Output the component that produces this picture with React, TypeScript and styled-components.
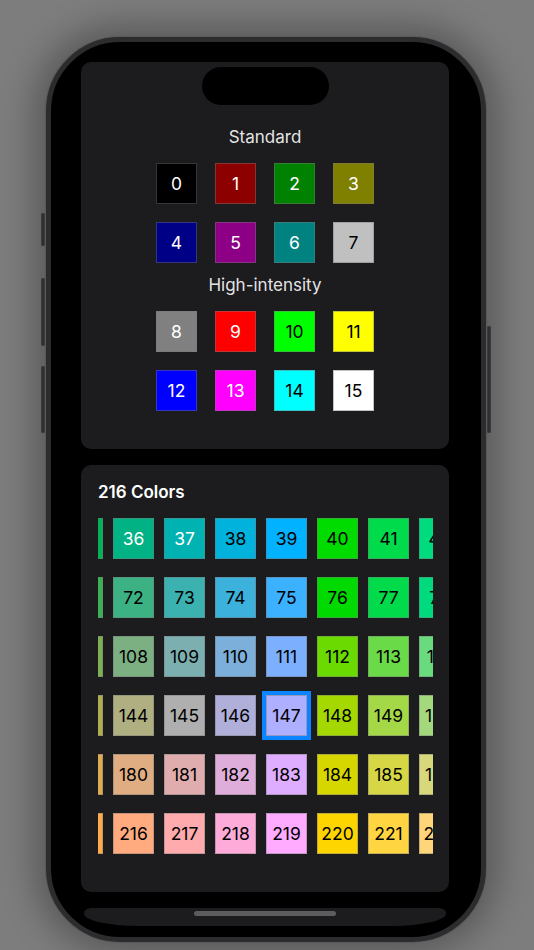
import { useLayoutEffect, useRef } from 'react'
import styled, { createGlobalStyle } from 'styled-components'

const GlobalStyle = createGlobalStyle`
  html, body {
    margin: 0;
    padding: 0;
    background: #7d7d7d;
    font-family: Inter, "Noto Sans", "Liberation Sans", sans-serif;
    -webkit-font-smoothing: antialiased;
  }
`

const Stage = styled.div`
  width: 534px;
  height: 950px;
  box-sizing: border-box;
  padding: 37px 0 0 46px;
  overflow: hidden;
`

const Phone = styled.div`
  position: relative;
  width: 440px;
  height: 905px;
  box-sizing: border-box;
  border: 5px solid #2c2c2e;
  border-radius: 74px;
  background: #000;
  box-shadow: 0 0 0 1px #595959, 0 0 36px 10px rgba(0, 0, 0, 0.32);
  padding: 20px 32px 0 30px;
  display: flex;
  flex-direction: column;
  gap: 16px;
`

const SideButton = styled.div<{ $side: 'left' | 'right'; $top: number; $height: number }>`
  position: absolute;
  ${(p) => (p.$side === 'left' ? 'left: -10px;' : 'right: -10px;')}
  top: ${(p) => p.$top}px;
  width: 4px;
  height: ${(p) => p.$height}px;
  border-radius: 2px;
  background: #2f2f31;
  box-shadow: inset 0 0 0 1px #3c3c3e;
`

const Island = styled.div`
  position: absolute;
  top: 25px;
  left: 151px;
  width: 127px;
  height: 38px;
  border-radius: 19px;
  background: #000;
  z-index: 2;
`

const Card = styled.section<{ $height: number }>`
  flex: none;
  height: ${(p) => p.$height}px;
  box-sizing: border-box;
  border-radius: 10px;
  background: #1c1c1e;
`

const StandardCard = styled(Card)`
  padding-top: 64px;
  display: flex;
  flex-direction: column;
  align-items: center;
`

const SectionLabel = styled.div<{ $gap?: number }>`
  margin-top: ${(p) => p.$gap ?? 0}px;
  font-size: 17px;
  line-height: 22px;
  color: rgba(255, 255, 255, 0.9);
`

const SwatchGrid = styled.div<{ $gap: number }>`
  display: grid;
  grid-template-columns: repeat(4, 41px);
  gap: 18px;
  margin-top: ${(p) => p.$gap}px;
`

const Swatch = styled.div<{ $bg: string; $dark: boolean; $selected?: boolean }>`
  width: 41px;
  height: 41px;
  box-sizing: border-box;
  display: flex;
  align-items: center;
  justify-content: center;
  background: ${(p) => p.$bg};
  border: 1px solid rgba(120, 120, 120, 0.45);
  color: ${(p) => (p.$dark ? '#000' : '#fff')};
  font-size: 17.5px;
  line-height: 1;
  outline: ${(p) => (p.$selected ? '4px solid #0a84ff' : 'none')};
`

const CubeCard = styled(Card)`
  padding: 16px 16px 0 17px;
`

const CardTitle = styled.h2`
  margin: 0;
  font-size: 17px;
  line-height: 22px;
  font-weight: 600;
  color: #fff;
`

const ScrollArea = styled.div`
  margin-top: 15px;
  overflow-x: auto;
  overflow-y: hidden;
  scrollbar-width: none;
  &::-webkit-scrollbar {
    display: none;
  }
`

const CubeGrid = styled.div`
  display: grid;
  grid-template-columns: repeat(36, 41px);
  column-gap: 10px;
  row-gap: 18px;
  width: max-content;
  padding: 4px 0;
  margin: -4px 0;
`

const HomeBar = styled.div`
  flex: none;
  height: 18px;
  margin: 0 3px;
  border-radius: 8px 8px 60px 60px / 6px 6px 14px 14px;
  background: #1c1c1e;
  display: flex;
  justify-content: center;
`

const HomeIndicator = styled.div`
  width: 142px;
  height: 5px;
  margin-top: 3px;
  border-radius: 3px;
  background: #5c5c5e;
`

type RGB = [number, number, number]

const standard: RGB[] = [
  [0, 0, 0], [128, 0, 0], [0, 128, 0], [128, 128, 0],
  [0, 0, 128], [128, 0, 128], [0, 128, 128], [192, 192, 192],
]
const bright: RGB[] = [
  [128, 128, 128], [255, 0, 0], [0, 255, 0], [255, 255, 0],
  [0, 0, 255], [255, 0, 255], [0, 255, 255], [255, 255, 255],
]
const levels = [0, 95, 135, 175, 215, 255]

// the device paints palette values in its wide-gamut space
const paint = ([r, g, b]: RGB) =>
  `color(display-p3 ${(r / 255).toFixed(4)} ${(g / 255).toFixed(4)} ${(b / 255).toFixed(4)})`

function luminance(rgb: RGB) {
  const ch = rgb.map((v) => {
    const s = v / 255
    return s <= 0.04045 ? s / 12.92 : Math.pow((s + 0.055) / 1.055, 2.4)
  })
  return 0.2126 * ch[0] + 0.7152 * ch[1] + 0.0722 * ch[2]
}

const isLight = (rgb: RGB) => luminance(rgb) > 0.343

const SELECTED = 147
const PITCH = 51

function App() {
  const scrollRef = useRef<HTMLDivElement>(null)

  useLayoutEffect(() => {
    const col = (SELECTED - 16) % 36
    if (scrollRef.current) scrollRef.current.scrollLeft = (col - 3) * PITCH - 15
  }, [])

  const cube = Array.from({ length: 216 }, (_, i) => {
    const rgb: RGB = [levels[Math.floor(i / 36)], levels[Math.floor((i % 36) / 6)], levels[i % 6]]
    return { index: i + 16, rgb }
  })

  return (
    <>
      <GlobalStyle />
      <Stage>
        <Phone>
          <SideButton $side="left" $top={171} $height={33} />
          <SideButton $side="left" $top={236} $height={68} />
          <SideButton $side="left" $top={324} $height={67} />
          <SideButton $side="right" $top={284} $height={107} />
          <Island />

          <StandardCard $height={387}>
            <SectionLabel>Standard</SectionLabel>
            <SwatchGrid $gap={15}>
              {standard.map((c, i) => (
                <Swatch key={i} $bg={paint(c)} $dark={isLight(c)}>
                  {i}
                </Swatch>
              ))}
            </SwatchGrid>
            <SectionLabel $gap={11}>High-intensity</SectionLabel>
            <SwatchGrid $gap={15}>
              {bright.map((c, i) => (
                <Swatch key={i} $bg={paint(c)} $dark={isLight(c)}>
                  {i + 8}
                </Swatch>
              ))}
            </SwatchGrid>
          </StandardCard>

          <CubeCard $height={427}>
            <CardTitle>216 Colors</CardTitle>
            <ScrollArea ref={scrollRef}>
              <CubeGrid>
                {cube.map((s) => (
                  <Swatch
                    key={s.index}
                    $bg={paint(s.rgb)}
                    $dark={isLight(s.rgb)}
                    $selected={s.index === SELECTED}
                  >
                    {s.index}
                  </Swatch>
                ))}
              </CubeGrid>
            </ScrollArea>
          </CubeCard>

          <HomeBar>
            <HomeIndicator />
          </HomeBar>
        </Phone>
      </Stage>
    </>
  )
}

export default App
